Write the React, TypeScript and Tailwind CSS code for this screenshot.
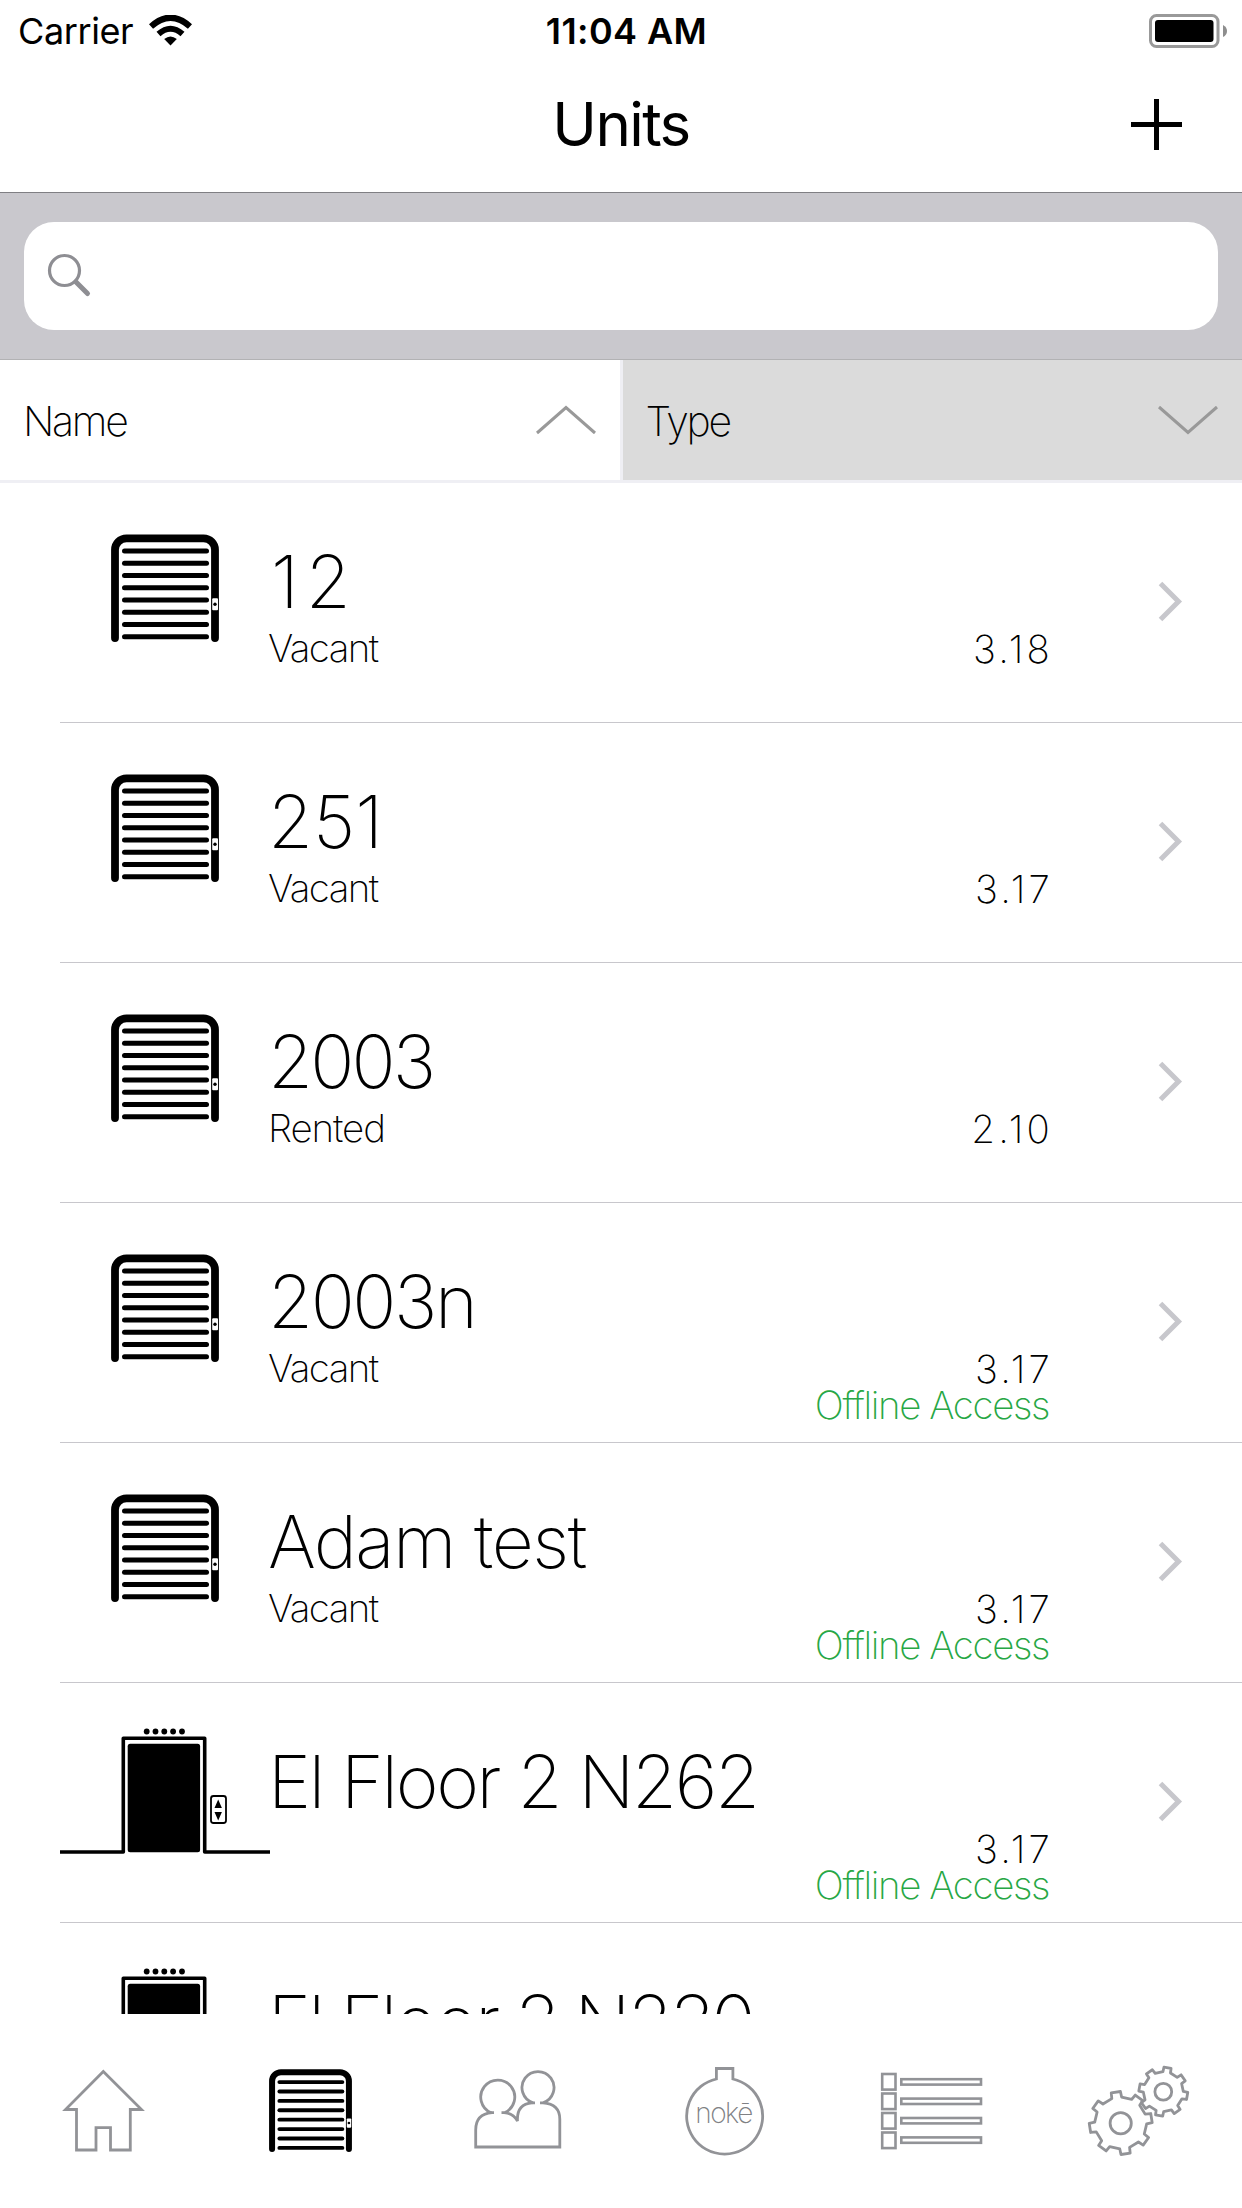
import { useState } from 'react';

type Unit = {
    name: string;
    status?: string;
    version?: string;
    offline?: boolean;
    kind: 'door' | 'elevator';
    spacing: string;
};

const units: Unit[] = [
    { name: '12', status: 'Vacant', version: '3.18', kind: 'door', spacing: 'ml-[3px] tracking-[7px]' },
    { name: '251', status: 'Vacant', version: '3.17', kind: 'door', spacing: '' },
    { name: '2003', status: 'Rented', version: '2.10', kind: 'door', spacing: 'tracking-[-2.8px]' },
    { name: '2003n', status: 'Vacant', version: '3.17', offline: true, kind: 'door', spacing: 'tracking-[-2.4px]' },
    { name: 'Adam test', status: 'Vacant', version: '3.17', offline: true, kind: 'door', spacing: 'tracking-[-1.5px]' },
    { name: 'El Floor 2 N262', version: '3.17', offline: true, kind: 'elevator', spacing: 'tracking-[-2.3px]' },
    { name: 'El Floor 3 N230', kind: 'elevator', spacing: 'tracking-[-2.5px]' },
];

const slats = [0, 1, 2, 3, 4, 5, 6, 7];

function DoorIcon({ className }: { className: string }) {
    return (
        <svg className={className} viewBox="0 0 108 108" fill="none">
            <path d="M4 104V16A11.5 11.5 0 0 1 15.5 4.3H92.5A11.5 11.5 0 0 1 104 16V104" stroke="#000" strokeWidth="7.8" strokeLinecap="round" />
            {slats.map((i) => (
                <path key={i} d={`M13.5 ${17 + i * 12.24}H95.5`} stroke="#000" strokeWidth="5" strokeLinecap="round" />
            ))}
            <rect x="101.2" y="64.3" width="5.8" height="12" rx="1" fill="#fff" />
            <circle cx="104" cy="70.2" r="1.7" fill="#000" />
        </svg>
    );
}

function ElevatorIcon() {
    return (
        <svg className="h-[239px] w-[210px]" viewBox="0 0 210 239" fill="none">
            <path d="M0 169H63.3V55.3H144.7V169H210" stroke="#000" strokeWidth="3.6" strokeLinejoin="round" />
            <rect x="67.7" y="60.7" width="72.4" height="108.6" rx="2.5" fill="#000" />
            {[86.7, 95.5, 104.3, 113.1, 122].map((x) => (
                <circle key={x} cx={x} cy="48.5" r="2.9" fill="#000" />
            ))}
            <rect x="151" y="113" width="15" height="27" rx="2.5" stroke="#000" strokeWidth="1.8" />
            <path d="M158.2 116.5l3.7 8.5h-7.4zM158.2 137.5l3.7-8.5h-7.4z" fill="#000" />
        </svg>
    );
}

// eight teeth, `turn` is the direction of the first one in degrees
function gearPath(cx: number, cy: number, body: number, outer: number, turn: number) {
    const points: string[] = [];
    for (let i = 0; i < 8; i++) {
        const steps = [[-11, body], [-8.5, outer], [8.5, outer], [11, body]];
        steps.forEach(([angle, radius]) => {
            const a = ((turn + i * 45 + angle) * Math.PI) / 180;
            points.push(`${(cx + radius * Math.cos(a)).toFixed(2)} ${(cy + radius * Math.sin(a)).toFixed(2)}`);
        });
    }
    return `M${points.join('L')}Z`;
}

function StatusBar() {
    return (
        <div className="grid h-[60px] grid-cols-3 items-center pl-[18px] pr-[15px] text-[36px] leading-[60px]">
            <div className="flex items-center gap-[16px]">
                <span className="pt-[1px] tracking-[-0.4px]">Carrier</span>
                <svg className="h-[31px] w-[43px]" viewBox="0 0 43 31" fill="none" stroke="#000">
                    <path d="M2 11.5Q21.5-6 41 11.5" strokeWidth="6.2" />
                    <path d="M9.5 19Q21.5 8.5 33.5 19" strokeWidth="6" />
                    <path d="M21.5 30.5l-6.3-6.6q6.3-5 12.6 0z" fill="#000" stroke="none" />
                </svg>
            </div>
            <span className="pl-[8px] pt-[1px] text-center font-semibold tracking-[0.4px]">11:04 AM</span>
            <svg className="h-[36px] w-[80px] justify-self-end" viewBox="0 0 80 36" fill="none">
                <rect x="3.5" y="2.5" width="67.5" height="31" rx="6" stroke="#999" strokeWidth="3" />
                <rect x="8" y="7" width="58.5" height="22" rx="3" fill="#000" />
                <path d="M76 12q4 2 4 6t-4 6z" fill="#8e8e8e" />
            </svg>
        </div>
    );
}

function SortTab({ label, active, onClick }: { label: string; active: boolean; onClick: () => void }) {
    return (
        <button
            onClick={onClick}
            className={`flex flex-1 items-center justify-between pl-[23px] pr-[23px] text-[41px] font-extralight ${active ? 'bg-white' : 'bg-[#dbdbdb]'}`}
        >
            <span className="pt-[4px] tracking-[-2.3px]">{label}</span>
            <svg className="h-[30px] w-[62px]" viewBox="0 0 62 30" fill="none" stroke="#999" strokeWidth="3">
                <path d={active ? 'M2 28L31 2.5L60 28' : 'M2 2L31 27.5L60 2'} />
            </svg>
        </button>
    );
}

function UnitRow({ unit }: { unit: Unit }) {
    return (
        <li className="ml-[60px] flex h-[240px] shrink-0 border-b border-[#c8c7cc]">
            <div className="w-[210px] shrink-0">
                {unit.kind === 'door' ? <DoorIcon className="ml-[51px] mt-[51px] size-[108px]" /> : <ElevatorIcon />}
            </div>
            <div className="-ml-[2px] flex-1 whitespace-nowrap pt-[55px] font-extralight">
                <h2 className={`text-[73px] leading-[88px] ${unit.spacing}`}>{unit.name}</h2>
                <p className={`text-[38.5px] leading-[45px] ${unit.status === 'Rented' ? 'tracking-[-1.1px]' : 'tracking-[-1.6px]'}`}>
                    {unit.status}
                </p>
            </div>
            <div className="whitespace-nowrap pt-[148px] text-right text-[38.5px] font-extralight leading-[36px]">
                <p className="-mr-[3px] tracking-[3.2px]">{unit.version}</p>
                {unit.offline && <p className="pr-[1px] tracking-[-1.4px] text-[#28a745]">Offline Access</p>}
            </div>
            <svg className="ml-[108px] mr-[58px] mt-[98px] h-[42px] w-[26px]" viewBox="0 0 26 42" fill="none" stroke="#c7c7cc" strokeWidth="5">
                <path d="M2.5 2.5L20.5 20.5L2.5 38.5" />
            </svg>
        </li>
    );
}

function TabBar() {
    const tab = 'h-[194px] w-[207px]';
    return (
        <nav className="flex h-[194px] bg-white">
            <svg className={tab} viewBox="0 0 207 194" fill="none" stroke="#929397" strokeWidth="2.8">
                <path d="M103.3 57.5L65.5 95.5H76.5V136H96V113.7H110.5V136H130.3V95.5H141.5Z" />
            </svg>
            <div className="w-[207px] pl-[62px] pt-[55px]">
                <DoorIcon className="size-[83px]" />
            </div>
            <svg className={tab} viewBox="0 0 207 194" fill="none" stroke="#929397" strokeWidth="2.8">
                <path d="M80 98.7H77A17 17 0 1 1 90.5 98.7H87.5M90 98.7Q99 99 103.5 107Q102.5 90 118 88.8H121" />
                <path d="M78 98.7Q61.7 100 61.7 116V133H145.8V105Q145.8 90 129 88.8H126M119 88.8A16 16 0 1 1 129 88.8" />
            </svg>
            <div className="grid w-[207px] place-items-center">
                <svg className="col-start-1 row-start-1 h-[194px] w-[207px]" viewBox="0 0 207 194" fill="none" stroke="#929397" strokeWidth="2.8">
                    <path d="M95.4 65V54.5H111.9V65A38 38 0 1 1 95.4 65Z" />
                </svg>
                <span className="col-start-1 row-start-1 pr-[2px] pt-[3px] text-[28px] font-extralight tracking-[-1.5px] text-[#808184]">nokē</span>
            </div>
            <svg className={tab} viewBox="0 0 207 194" fill="none" stroke="#929397" strokeWidth="2.6">
                {[0, 1, 2, 3].map((i) => (
                    <g key={i}>
                        <rect x="54.2" y={60 + i * 19.5} width="13.3" height="15.6" />
                        <rect x="73.3" y={65.2 + i * 19.4} width="79.7" height="5.4" />
                    </g>
                ))}
            </svg>
            <svg className={tab} viewBox="0 0 207 194" fill="none" stroke="#929397" strokeWidth="2.8" strokeLinejoin="round">
                <path d={gearPath(85.7, 109, 26, 31.5, -9)} />
                <circle cx="85.7" cy="109.3" r="10.6" />
                <path d={gearPath(128.3, 77.7, 20, 24.5, 10)} />
                <circle cx="128.3" cy="77.7" r="8.4" />
            </svg>
        </nav>
    );
}

export default function App() {
    const [sort, setSort] = useState('Name');

    return (
        <div className="flex h-[2208px] w-[1242px] flex-col overflow-hidden bg-white font-['Inter','Liberation_Sans',sans-serif] text-black">
            <header className="h-[193px] border-b border-[#7f7f83]">
                <StatusBar />
                <div className="grid h-[129px] grid-cols-3 items-center">
                    <h1 className="col-start-2 pb-[2px] text-center text-[60px] tracking-[-1.6px]">Units</h1>
                    <svg className="mr-[58px] size-[55px] justify-self-end" viewBox="0 0 55 55" stroke="#000" strokeWidth="5">
                        <path d="M27.5 2V53M2 27.5H53" />
                    </svg>
                </div>
            </header>
            <div className="h-[167px] border-b border-[#b2b2b4] bg-[#c9c8cd] px-6 pt-[29px]">
                <div className="h-[108px] rounded-[30px] bg-white pl-[22px] pt-[30px]">
                    <svg className="h-[46px] w-[46px]" viewBox="0 0 46 46" fill="none" stroke="#8e8e93" strokeLinecap="round">
                        <circle cx="18.5" cy="18.5" r="15" strokeWidth="3.2" />
                        <path d="M30 30L41.5 41.5" strokeWidth="5" />
                    </svg>
                </div>
            </div>
            <div className="flex h-[123px] gap-[3px] border-b-[3px] border-[#efeff4] bg-[#efeff4]">
                <SortTab label="Name" active={sort === 'Name'} onClick={() => setSort('Name')} />
                <SortTab label="Type" active={sort === 'Type'} onClick={() => setSort('Type')} />
            </div>
            <ul className="flex h-[1531px] flex-col overflow-hidden">
                {units.map((unit) => (
                    <UnitRow key={unit.name} unit={unit} />
                ))}
            </ul>
            <TabBar />
        </div>
    );
}
